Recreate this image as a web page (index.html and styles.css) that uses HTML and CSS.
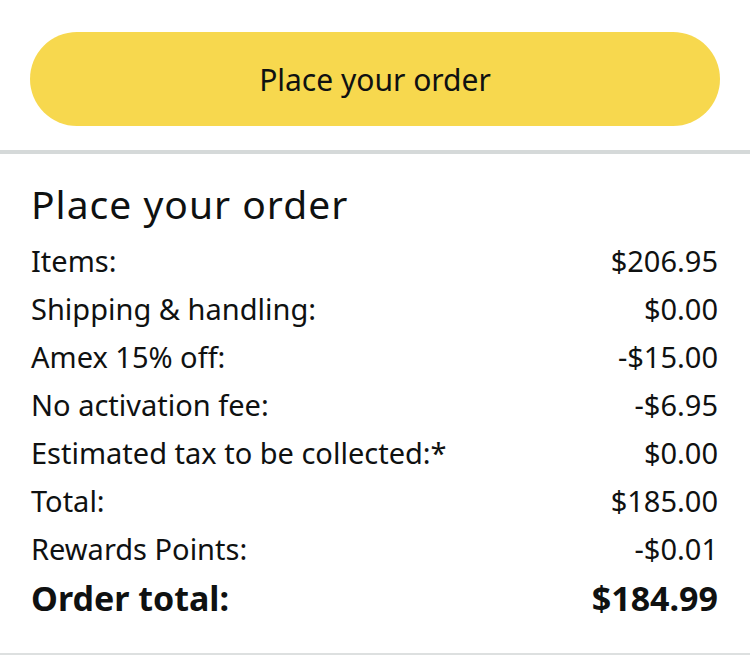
FILE: index.html
```html
<!DOCTYPE html>
<html>
<head>
<meta charset="utf-8">
<link rel="stylesheet" href="styles.css">
</head>
<body>
<div class="top">
  <button class="place-btn">Place your order</button>
</div>
<div class="summary">
  <h1 class="title">Place your order</h1>
  <div class="row"><span>Items:</span><span>$206.95</span></div>
  <div class="row"><span>Shipping &amp; handling:</span><span>$0.00</span></div>
  <div class="row"><span>Amex 15% off:</span><span>-$15.00</span></div>
  <div class="row"><span>No activation fee:</span><span>-$6.95</span></div>
  <div class="row"><span>Estimated tax to be collected:*</span><span>$0.00</span></div>
  <div class="row"><span>Total:</span><span>$185.00</span></div>
  <div class="row"><span>Rewards Points:</span><span>-$0.01</span></div>
  <div class="row total"><span>Order total:</span><span>$184.99</span></div>
</div>
</body>
</html>
```
FILE: styles.css
```css
html, body {
  margin: 0;
  padding: 0;
  background: #fff;
  color: #0f1111;
  font-family: "Noto Sans", "Open Sans", sans-serif;
}
.top {
  padding: 32px 30px 24px 30px;
}
.place-btn {
  display: block;
  width: 100%;
  height: 94px;
  border: none;
  border-radius: 47px;
  background: #f7d84e;
  color: #0f1111;
  font-family: "Noto Sans", sans-serif;
  font-size: 30px;
  padding: 0;
}
.summary {
  border-top: 4px solid #d5d9d9;
  border-bottom: 2px solid #dde0e0;
  padding: 26px 32px 0 31px;
  height: 505px;
  box-sizing: border-box;
}
.title {
  margin: 0 0 9px 0;
  font-size: 39px;
  letter-spacing: 1px;
  font-weight: 400;
  line-height: 48px;
}
.row {
  display: flex;
  justify-content: space-between;
  font-size: 29px;
  line-height: 48px;
}
.row.total {
  font-weight: 700;
  font-size: 34px;
  line-height: 48px;
  margin-top: 1px;
}
```
